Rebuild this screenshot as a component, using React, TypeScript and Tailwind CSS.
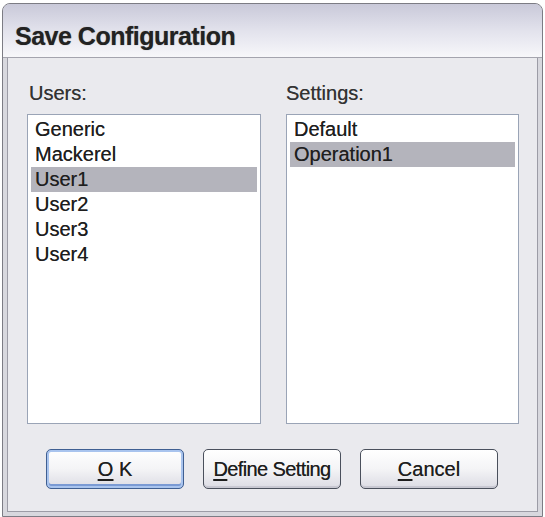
import React from "react";

const font = { fontFamily: '"Liberation Sans", Arial, sans-serif' };

function ListBox({ items, selected, width }: { items: string[]; selected: number; width: string }) {
  return (
    <div className={`${width} h-[310px] border border-[#9aa4b6] bg-white pt-[2px]`}>
      {items.map((it, i) => (
        <div
          key={it}
          className={`h-[25px] leading-[25px] text-[20px] text-[#1e1e1e] pl-[4px] ml-[3px] mr-[3px] [text-shadow:0_0_0.5px_#555] ${
            i === selected ? "bg-[#b4b4bc]" : ""
          }`}
        >
          {it}
        </div>
      ))}
    </div>
  );
}

function Btn({ children, def }: { children: React.ReactNode; def?: boolean }) {
  return (
    <button
      className={`w-[138px] h-[40px] rounded-[5px] border text-[20px] text-[#1e1e1e] [text-shadow:0_0_0.5px_#555] bg-gradient-to-b from-[#ffffff] via-[#f4f4f6] to-[#dcdce4] ${
        def
          ? "border-[#3f5f92] shadow-[inset_0_0_0_2px_#a9c4ee,inset_0_-2px_0_2px_#7a9ad4]"
          : "border-[#4a505c] shadow-[inset_0_-2px_0_0_#c8c8d2]"
      }`}
    >
      {children}
    </button>
  );
}

export default function App() {
  return (
    <div className="w-[545px] h-[517px] bg-white overflow-hidden" style={font}>
      <div className="ml-[2px] pt-[3px]">
        <div className="w-[541px] h-[514px] border border-[#7c7c84] rounded-t-[8px] bg-[#d8d8de] flex flex-col overflow-hidden">
          <div className="h-[54px] shrink-0 bg-gradient-to-b from-[#c9c9d9] via-[#e2e2ec] to-[#f7f7fa] border-b border-[#a4a4ae] pl-[12px] pt-[17px]">
            <div className="text-[25px] leading-[30px] font-bold tracking-[-0.5px] text-[#222] [text-shadow:0_0_1px_#888]">
              Save Configuration
            </div>
          </div>
          <div className="flex-1 px-[4px] pb-[4px]">
            <div className="h-full border border-[#9c9ca6] border-t-0 bg-[#eaeaee] flex flex-col">
              <div className="flex pl-[19px] pt-[23px] gap-[25px]">
                <div className="flex flex-col">
                  <div className="h-[24px] leading-[24px] text-[20px] text-[#333] pl-[2px] mb-[9px] [text-shadow:0_0_0.5px_#666]">Users:</div>
                  <ListBox
                    width="w-[234px]"
                    items={["Generic", "Mackerel", "User1", "User2", "User3", "User4"]}
                    selected={2}
                  />
                </div>
                <div className="flex flex-col">
                  <div className="h-[24px] leading-[24px] text-[20px] text-[#333] mb-[9px] [text-shadow:0_0_0.5px_#666]">Settings:</div>
                  <ListBox width="w-[233px]" items={["Default", "Operation1"]} selected={1} />
                </div>
              </div>
              <div className="flex pl-[38px] pt-[25px] gap-[19px]">
                <Btn def>
                  <span className="underline underline-offset-[3px]">O</span> K
                </Btn>
                <Btn>
                  <span className="tracking-[-0.6px]">
                    <span className="underline underline-offset-[3px]">D</span>efine Setting
                  </span>
                </Btn>
                <Btn>
                  <span className="underline underline-offset-[3px]">C</span>ancel
                </Btn>
              </div>
            </div>
          </div>
        </div>
      </div>
    </div>
  );
}
